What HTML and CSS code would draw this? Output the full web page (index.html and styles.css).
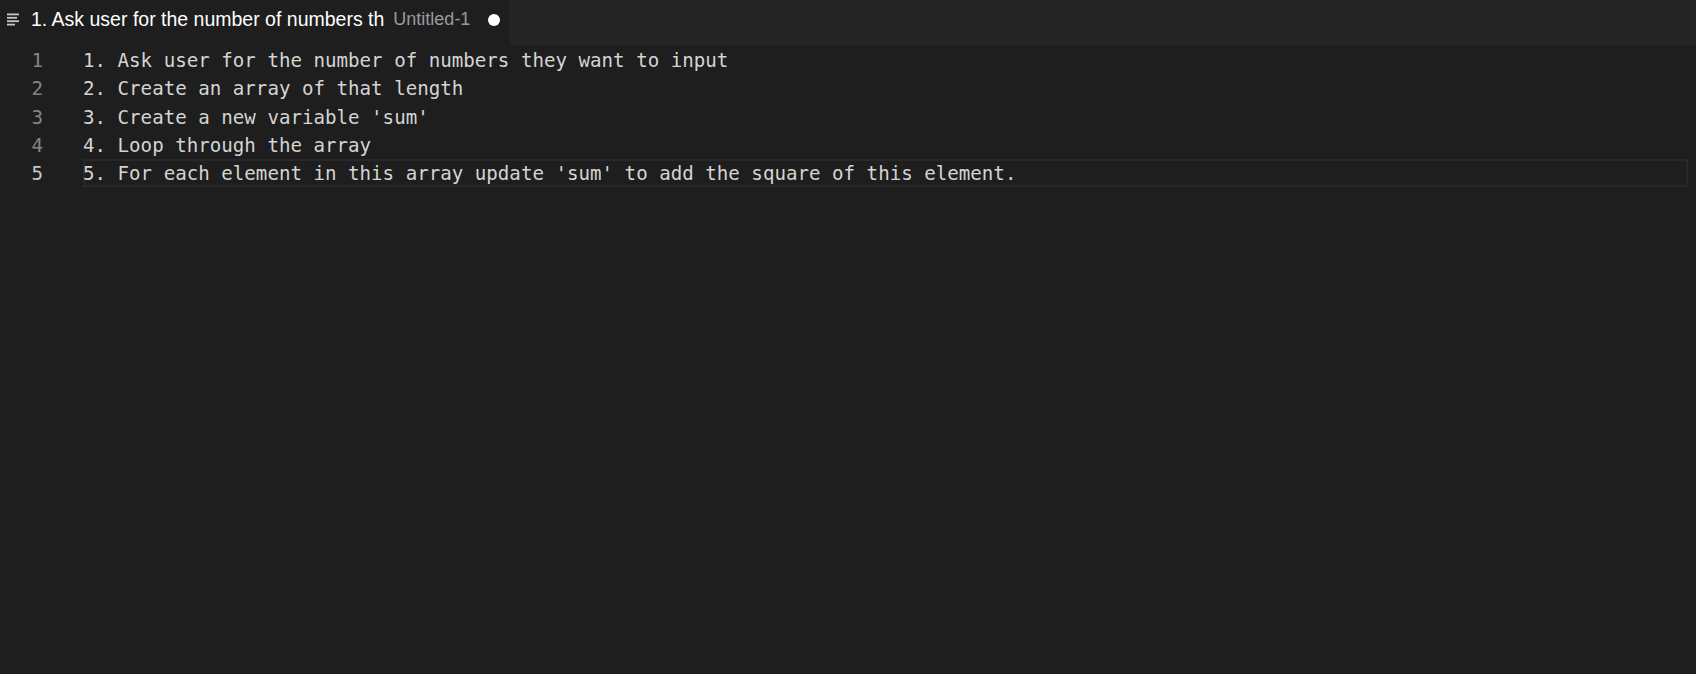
FILE: index.html
```html
<!DOCTYPE html>
<html>
<head>
<meta charset="utf-8">
<link rel="stylesheet" href="styles.css">
</head>
<body>
<div class="tabbar">
  <div class="tab">
    <svg class="tab-icon" width="13" height="13" viewBox="0 0 13 13">
      <rect x="0" y="0.5" width="12" height="1.8" fill="#c5c5c5"/>
      <rect x="0" y="3.9" width="10" height="1.8" fill="#c5c5c5"/>
      <rect x="0" y="7.3" width="12" height="1.8" fill="#c5c5c5"/>
      <rect x="0" y="10.7" width="8" height="1.8" fill="#c5c5c5"/>
    </svg>
    <span class="tab-title">1. Ask user for the number of numbers th</span>
    <span class="tab-desc">Untitled-1</span>
    <span class="dirty"></span>
  </div>
</div>
<div class="editor">
  <div class="gutter">
    <div class="ln">1</div>
    <div class="ln">2</div>
    <div class="ln">3</div>
    <div class="ln">4</div>
    <div class="ln active">5</div>
  </div>
  <div class="code">
    <div class="line">1. Ask user for the number of numbers they want to input</div>
    <div class="line">2. Create an array of that length</div>
    <div class="line">3. Create a new variable 'sum'</div>
    <div class="line">4. Loop through the array</div>
    <div class="line current">5. For each element in this array update 'sum' to add the square of this element.</div>
  </div>
</div>
</body>
</html>
```

FILE: styles.css
```css
html, body {
  margin: 0;
  padding: 0;
  background: #1e1e1e;
  height: 100%;
  overflow: hidden;
}

.tabbar {
  height: 45px;
  background: #252526;
  display: flex;
}

.tab {
  width: 510px;
  background: #1e1e1e;
  display: flex;
  align-items: center;
  padding-left: 7px;
  box-sizing: border-box;
  font-family: "Liberation Sans", Arial, sans-serif;
  white-space: nowrap;
  overflow: hidden;
  padding-bottom: 6px;
}

.tab-icon {
  flex: none;
  margin-right: 11px;
}

.tab-title {
  color: #ffffff;
  font-size: 19.5px;
}

.tab-desc {
  color: #9a9a9a;
  font-size: 18px;
  margin-left: 9px;
}

.dirty {
  width: 12px;
  height: 12px;
  border-radius: 50%;
  background: #ffffff;
  margin-left: 18px;
  flex: none;
}

.editor {
  display: flex;
  padding-top: 1px;
  font-family: "DejaVu Sans Mono", "Liberation Mono", monospace;
  font-size: 19.15px;
  line-height: 28.3px;
}

.gutter {
  width: 83px;
  flex: none;
  box-sizing: border-box;
  padding-right: 40px;
  text-align: right;
  color: #858585;
}

.ln, .line {
  height: 28.3px;
  box-sizing: border-box;
  padding-top: 2px;
  line-height: 26.3px;
}

.ln.active {
  color: #c6c6c6;
}

.code {
  flex: 1;
  margin-right: 8px;
  color: #d4d4d4;
}

.line {
  white-space: pre;
}

.line.current {
  box-shadow: inset 0 0 0 2px #282828;
}
```
